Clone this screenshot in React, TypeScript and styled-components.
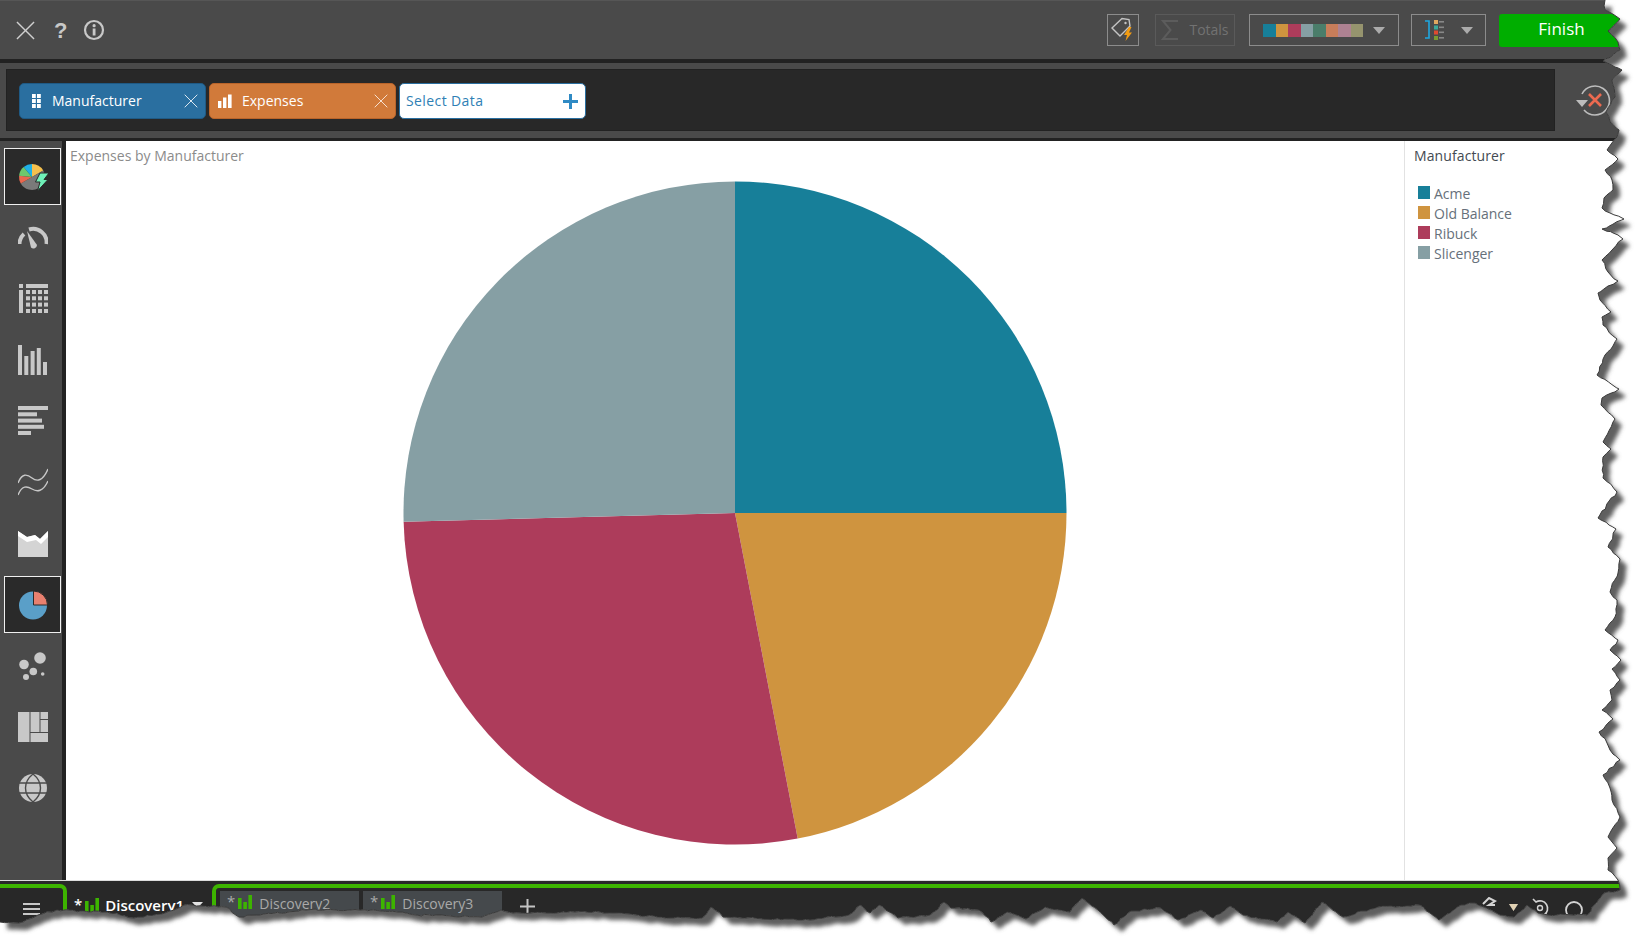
import React from "react";
import styled, { createGlobalStyle } from "styled-components";

const GlobalStyle = createGlobalStyle`
  html, body { margin: 0; padding: 0; background: #fff; }
  body { font-family: "Open Sans", "Noto Sans", "Liberation Sans", sans-serif; overflow: hidden; }
`;

const FONT = `"Open Sans", "Noto Sans", "Liberation Sans", sans-serif`;

const Page = styled.div`
  position: relative;
  width: 1645px;
  height: 945px;
  overflow: hidden;
  background: #fff;
  display: flex;
  flex-direction: column;
  font-family: ${FONT};
`;

const TopBar = styled.header`
  height: 59px;
  flex: none;
  box-sizing: border-box;
  background: #4a4a4a;
  border-top: 1px solid #565656;
  display: flex;
  align-items: center;
  padding: 0 0 0 16px;
`;

const HelpMark = styled.span`
  font-family: "Liberation Sans", sans-serif;
  font-weight: 700;
  font-size: 22px;
  line-height: 1;
  color: #c8c8c8;
  margin: 2px 16px 0 19px;
`;

const Spacer = styled.div`
  flex: 1;
`;

const ToolBox = styled.div<{ $w: number; $muted?: boolean; $mr: number }>`
  width: ${(p) => p.$w}px;
  height: 32px;
  flex: none;
  box-sizing: border-box;
  border: 1px solid ${(p) => (p.$muted ? "#5a5a5a" : "#8c8c8c")};
  margin-right: ${(p) => p.$mr}px;
  display: flex;
  align-items: center;
  justify-content: center;
`;

const TotalsLabel = styled.span`
  color: #727272;
  font-size: 14px;
  margin: -2px 0 0 10px;
`;

const Swatches = styled.div`
  display: flex;
  margin-right: 10px;
`;

const Swatch = styled.i<{ $c: string }>`
  display: block;
  width: 12.5px;
  height: 13px;
  background: ${(p) => p.$c};
`;

const Caret = styled.i`
  display: block;
  width: 0;
  height: 0;
  border-left: 6px solid transparent;
  border-right: 6px solid transparent;
  border-top: 7px solid #ababab;
`;

const ColumnGap = styled.span`
  width: 15px;
  flex: none;
`;

const FinishButton = styled.button`
  width: 146px;
  height: 33px;
  flex: none;
  border: 0;
  border-radius: 3px 0 0 3px;
  background: #00ae00;
  color: #fff;
  font-family: ${FONT};
  font-size: 17px;
  padding: 0 21px 4px 0;
  text-align: center;
`;

const Rule = styled.div<{ $h: number }>`
  height: ${(p) => p.$h}px;
  flex: none;
  background: #222;
`;

const FilterBand = styled.section`
  height: 75px;
  flex: none;
  box-sizing: border-box;
  background: #4a4a4a;
  padding: 6px 0 7px 6px;
  display: flex;
  align-items: stretch;
`;

const FilterWell = styled.div`
  width: 1549px;
  box-sizing: border-box;
  background: #282828;
  border: 1px solid #222;
  padding: 14px 12px 12px;
  display: flex;
  align-items: center;
  gap: 3px;
`;

const Chip = styled.div<{ $bg: string; $line: string; $pad: number }>`
  width: 187px;
  height: 36px;
  flex: none;
  box-sizing: border-box;
  background: ${(p) => p.$bg};
  border: 1px solid ${(p) => p.$line};
  border-radius: 5px;
  color: ${(p) => (p.$bg === "#fff" ? "#2f7fb5" : "#fff")};
  font-size: 14px;
  display: flex;
  align-items: center;
  padding: 0 7px 0 ${(p) => p.$pad}px;
`;

const ChipLabel = styled.span<{ $gap: number; $track?: number }>`
  flex: 1;
  margin-left: ${(p) => p.$gap}px;
  line-height: 1;
  letter-spacing: ${(p) => p.$track ?? 0}px;
`;

const ResetSlot = styled.div`
  flex: 1;
  display: flex;
  align-items: center;
  padding-left: 21px;
`;

const Main = styled.main`
  flex: 1;
  min-height: 0;
  display: flex;
`;

const Sidebar = styled.nav`
  width: 62px;
  flex: none;
  box-sizing: border-box;
  background: #4a4a4a;
  padding: 7px 1px 0 4px;
  display: flex;
  flex-direction: column;
  gap: 4.2px;
`;

const SideDivider = styled.div`
  width: 4px;
  flex: none;
  background: #222;
`;

const SideItem = styled.div<{ $on?: boolean }>`
  width: 57px;
  height: 57px;
  flex: none;
  box-sizing: border-box;
  display: flex;
  align-items: center;
  justify-content: center;
  padding-left: 1px;
  background: ${(p) => (p.$on ? "#2a2a2a" : "transparent")};
  border: 1px solid ${(p) => (p.$on ? "#f0f0f0" : "transparent")};
`;

const ChartArea = styled.div`
  position: relative;
  flex: 1;
  background: #fff;
  display: flex;
  align-items: center;
  justify-content: center;
  padding-top: 5px;
`;

const ChartTitle = styled.div`
  position: absolute;
  left: 4px;
  top: 5px;
  font-size: 14px;
  line-height: 20px;
  color: #8b8b8b;
`;

const Legend = styled.aside`
  width: 241px;
  flex: none;
  box-sizing: border-box;
  background: #fff;
  border-left: 1px solid #e2e2e2;
  padding: 5px 0 0 9px;
`;

const LegendTitle = styled.div`
  font-size: 14px;
  line-height: 20px;
  color: #434a52;
  letter-spacing: 0.1px;
  margin-bottom: 17px;
`;

const LegendRow = styled.div`
  display: flex;
  align-items: center;
  height: 20px;
  padding-left: 4px;
  font-size: 14px;
  color: #66707a;
`;

const LegendSwatch = styled.i<{ $c: string }>`
  width: 12px;
  height: 13px;
  margin: -2px 4px 0 0;
  background: ${(p) => p.$c};
`;

const Footer = styled.footer`
  height: 65px;
  flex: none;
  box-sizing: border-box;
  border-top: 1px solid #dcdcdc;
  background: #282828;
  padding-top: 3px;
  display: flex;
`;

const MenuCell = styled.div`
  width: 67px;
  flex: none;
  box-sizing: border-box;
  border-top: 4px solid #3db400;
  border-right: 4px solid #3db400;
  border-top-right-radius: 7px;
  height: 60px;
  display: flex;
  justify-content: center;
  padding: 14px 0 0 0;
`;

const ActiveTab = styled.div`
  width: 145px;
  flex: none;
  box-sizing: border-box;
  padding: 11px 0 0 7px;
  display: flex;
  align-items: flex-start;
  color: #fff;
  font-size: 15px;
  font-weight: 600;
  line-height: 20px;
`;

const TabStrip = styled.div`
  flex: 1;
  box-sizing: border-box;
  border-top: 4px solid #3db400;
  border-left: 4px solid #3db400;
  border-top-left-radius: 7px;
  padding: 3px 0 0 4px;
  display: flex;
  gap: 4px;
`;

const Tab = styled.div`
  width: 139px;
  height: 40px;
  flex: none;
  box-sizing: border-box;
  background: #45494c;
  padding: 1px 0 0 7px;
  display: flex;
  align-items: flex-start;
  color: #a9a9a9;
  font-size: 14px;
  line-height: 20px;
`;

const Star = styled.span`
  font-size: 15px;
  line-height: 18px;
  margin-right: 3px;
`;

const TabName = styled.span<{ $top: number; $left: number }>`
  margin-left: ${(p) => p.$left}px;
  margin-top: ${(p) => p.$top}px;
`;

const AddTab = styled.span`
  margin: 6px 0 0 14px;
  display: block;
`;

const FooterTools = styled.div`
  margin-left: auto;
  width: 164px;
  flex: none;
  padding-top: 6px;
  display: flex;
  align-items: flex-start;
`;

const TornEdge = styled.svg`
  position: absolute;
  left: 0;
  top: 0;
  width: 1645px;
  height: 945px;
  pointer-events: none;
`;

/* ---------- data ---------- */

const SERIES = [
  { name: "Acme", color: "#177f99", from: 0, to: 90 },
  { name: "Old Balance", color: "#cf943f", from: 90, to: 169.1 },
  { name: "Ribuck", color: "#ad3c5b", from: 169.1, to: 268.5 },
  { name: "Slicenger", color: "#869fa4", from: 268.5, to: 360 },
];

const PALETTE = ["#177f99", "#cf943f", "#ad3c5b", "#869fa4", "#4a7d6a", "#c87d5a", "#ae8292", "#96946e"];

const wedge = (cx: number, cy: number, r: number, a: number, b: number) => {
  const p = (d: number) => {
    const t = (d * Math.PI) / 180;
    return `${(cx + r * Math.sin(t)).toFixed(2)} ${(cy - r * Math.cos(t)).toFixed(2)}`;
  };
  return `M${cx} ${cy}L${p(a)}A${r} ${r} 0 ${b - a > 180 ? 1 : 0} 1 ${p(b)}Z`;
};

/* Hand-traced tear, subdivided with a small fixed jitter so it reads as torn paper. */
const roughen = (raw: string) => {
  const pts = raw.split(" ").map((s) => s.split(",").map(Number));
  const out: string[] = [];
  let seed = 7;
  const rnd = () => {
    seed = (seed * 16807) % 2147483647;
    return (seed / 2147483647 - 0.5) * 1.8;
  };
  pts.forEach((pt, i) => {
    out.push(`${pt[0]},${pt[1]}`);
    const next = pts[i + 1];
    if (!next) return;
    const len = Math.hypot(next[0] - pt[0], next[1] - pt[1]);
    const steps = Math.floor(len / 4);
    for (let k = 1; k < steps; k += 1) {
      const t = k / steps;
      const x = pt[0] + (next[0] - pt[0]) * t + rnd();
      const y = pt[1] + (next[1] - pt[1]) * t + rnd();
      out.push(`${x.toFixed(1)},${y.toFixed(1)}`);
    }
  });
  return out.join(" ");
};

const EDGE = roughen(
  "1605,0 1605,10 1611,13 1620,19 1608,31 1618,42 1620,50 1603,61 1622,70 1612,80 1615,97 1606,112 1610,122 1619,130 1617,137 1607,150 1618,159 1605,170 1612,180 1613,190 1604,198 1602,208 1610,213 1624,219 1602,229 1618,235 1623,239 1612,250 1602,260 1608,272 1618,281 1608,286 1598,293 1600,300 1611,312 1602,317 1603,325 1617,339 1605,355 1597,375 1619,389 1602,398 1601,405 1615,419 1603,442 1611,449 1603,457 1603,478 1617,492 1598,518 1616,529 1608,547 1620,559 1618,573 1610,592 1617,600 1615,617 1605,630 1618,640 1610,650 1621,660 1612,669 1620,680 1610,690 1612,700 1602,710 1613,719 1599,732 1607,743 1610,750 1620,760 1603,775 1610,788 1612,800 1620,817 1608,837 1617,848 1608,858 1608,870 1618,880 1620,890 1604,893 1587,915 1548,915 1538,913 1527,905 1514,917 1500,915 1475,903 1461,905 1439,920 1420,905 1378,907 1343,917 1322,902 1305,923 1288,912 1277,922 1243,915 1230,906 1213,918 1201,910 1178,920 1161,908 1131,911 1114,925 1098,910 1082,898 1070,912 1045,907 1026,919 1007,912 991,922 979,910 951,908 944,902 930,915 898,918 879,905 870,913 860,905 849,915 810,920 723,917 711,907 702,918 670,918 614,913 600,912 513,913 501,910 482,917 417,915 402,912 360,910 306,910 239,917 226,907 184,905 165,913 134,918 107,912 57,910 38,915 19,923 0,922",
);
const PAPER = `M0 0L${EDGE}Z`;
const OUTSIDE = `M0 0H1645V945H0Z${PAPER}`;

/* ---------- icons ---------- */

const Close = ({ s, c, w = 1.5 }: { s: number; c: string; w?: number }) => (
  <svg width={s} height={s} viewBox="0 0 20 20">
    <path d="M1 1L19 19M19 1L1 19" stroke={c} strokeWidth={w} fill="none" />
  </svg>
);

const InfoIcon = () => (
  <svg width="22" height="22" viewBox="0 0 22 22">
    <circle cx="11" cy="11" r="9" fill="none" stroke="#c8c8c8" strokeWidth="2.2" />
    <rect x="9.7" y="9.5" width="2.8" height="7" fill="#c8c8c8" />
    <circle cx="11.1" cy="6.7" r="1.6" fill="#c8c8c8" />
  </svg>
);

const TagBolt = () => (
  <svg width="24" height="26" viewBox="0 0 24 26">
    <path d="M1 11L11 1.5L18 2.5L19 9L9 19Z" fill="none" stroke="#c4c4c4" strokeWidth="1.4" />
    <circle cx="14.5" cy="6" r="1.2" fill="#c4c4c4" />
    <path d="M18 10L13 18H16L14.5 24L21 15.5H18L20.5 10Z" fill="#f39c12" />
  </svg>
);

const Sigma = () => (
  <svg width="18" height="22" viewBox="0 0 18 22">
    <path d="M17 2H2L9.5 11L2 20H17" fill="none" stroke="#5c5c5c" strokeWidth="2" />
  </svg>
);

const ColumnsIcon = () => (
  <svg width="22" height="22" viewBox="0 0 22 22">
    <path d="M1 2H5V19H1" fill="none" stroke="#1ea7e0" strokeWidth="1.6" />
    <rect x="10" y="1" width="4" height="4" fill="#e0a860" />
    <rect x="10" y="6.5" width="4" height="4" fill="#3aa89a" />
    <rect x="10" y="11.5" width="4" height="4" fill="#e04b30" />
    <rect x="10" y="17" width="4" height="4" fill="#7c9a30" />
    {[2, 7.5, 12.5, 18].map((y) => (
      <rect key={y} x="15" y={y} width="5" height="1.6" fill="#888" />
    ))}
  </svg>
);

const ResetIcon = () => (
  <svg width="36" height="36" viewBox="0 0 36 36">
    <path d="M6 12A14.5 14.5 0 1 1 8 28" fill="none" stroke="#bdbdbd" strokeWidth="1.6" />
    <path d="M0 18H12L6 25Z" fill="#bdbdbd" />
    <path d="M13 12L25 24M25 12L13 24" stroke="#ec6a50" strokeWidth="2.6" />
  </svg>
);

const GridGlyph = () => (
  <svg width="9" height="15" viewBox="0 0 9 15">
    {[0, 5, 10].map((y) =>
      [0, 5].map((x) => <rect key={`${x}${y}`} x={x} y={y} width="3.8" height="4" fill="#fff" />),
    )}
  </svg>
);

const BarsGlyph = () => (
  <svg width="14" height="14" viewBox="0 0 14 14">
    <rect x="0" y="7" width="3.4" height="7" fill="#fff" />
    <rect x="5" y="3.5" width="3.4" height="10.5" fill="#fff" />
    <rect x="10" y="0.5" width="3.6" height="13.5" fill="#fff" />
  </svg>
);

const PlusGlyph = () => (
  <svg width="15" height="15" viewBox="0 0 15 15">
    <path d="M7.5 0V15M0 7.5H15" stroke="#2f8ac4" strokeWidth="3" />
  </svg>
);

const TabBars = () => (
  <svg width="14" height="14" viewBox="0 0 14 14" style={{ marginTop: 3 }}>
    <rect x="0" y="3" width="3.6" height="11" fill="#3db400" />
    <rect x="5.3" y="7" width="3.6" height="7" fill="#3db400" />
    <rect x="10.4" y="0" width="3.6" height="14" fill="#3db400" />
  </svg>
);

const G = "#c8c8c8";

const Icon: React.FC<{ children: React.ReactNode }> = ({ children }) => (
  <svg width="30" height="30" viewBox="0 0 30 30">
    {children}
  </svg>
);

const SIDE_ICONS: { key: string; on?: boolean; node: React.ReactNode }[] = [
  {
    key: "auto",
    on: true,
    node: (
      <Icon>
        <path d={wedge(14, 15, 13, 0, 60)} fill="#f4c04e" />
        <path d={wedge(14, 15, 13, 60, 240)} fill="#7a7a7a" />
        <path d={wedge(14, 15, 13, 240, 275)} fill="#e8684f" />
        <path d={wedge(14, 15, 13, 275, 320)} fill="#6dc86d" />
        <path d={wedge(14, 15, 13, 320, 360)} fill="#1fb0e8" />
        <path d="M22 11H31L26 17.5H30L19.5 29L22 20H17.5Z" fill="#6ff0b8" stroke="#2a2a2a" strokeWidth="1" />
      </Icon>
    ),
  },
  {
    key: "gauge",
    node: (
      <Icon>
        <path d="M1.5 21A13.5 13.5 0 0 1 6 11" fill="none" stroke={G} strokeWidth="4" />
        <path d="M11 6.5A13.5 13.5 0 0 1 28.5 21" fill="none" stroke={G} strokeWidth="4" />
        <path d="M9 8L19 22A3.6 3.6 0 0 1 13 24.5Z" fill={G} />
      </Icon>
    ),
  },
  {
    key: "table",
    node: (
      <Icon>
        <rect x="1" y="0" width="4" height="4" fill={G} />
        <rect x="8" y="0" width="22" height="4" fill={G} />
        <rect x="1" y="6" width="4" height="23" fill={G} />
        {[6, 12.3, 18.6, 25].map((y) =>
          [8, 14, 20, 26].map((x) => <rect key={`${x}-${y}`} x={x} y={y} width="4" height="4" fill={G} />),
        )}
      </Icon>
    ),
  },
  {
    key: "bars",
    node: (
      <Icon>
        {[
          [0, 30],
          [6.3, 19],
          [12.6, 24],
          [18.8, 27],
          [25, 13],
        ].map(([x, h]) => (
          <rect key={x} x={x} y={30 - h} width="4" height={h} fill={G} />
        ))}
      </Icon>
    ),
  },
  {
    key: "hbars",
    node: (
      <Icon>
        {[
          [0, 30],
          [6.3, 19],
          [12.6, 24],
          [18.8, 26],
          [25, 13],
        ].map(([y, w]) => (
          <rect key={y} x="0" y={y} width={w} height="4" fill={G} />
        ))}
      </Icon>
    ),
  },
  {
    key: "lines",
    node: (
      <Icon>
        <path d="M0 16C4 6 9 7 14 11S25 14 30 2" fill="none" stroke={G} strokeWidth="1.4" />
        <path d="M0 28C4 18 9 19 14 22S25 25 30 14" fill="none" stroke={G} strokeWidth="1.4" />
      </Icon>
    ),
  },
  {
    key: "area",
    node: (
      <Icon>
        <path d="M0 2L9 8L17 6L22 10L30 2V28H0Z" fill="#d4d4d4" />
        <path d="M0 2L9 8L17 6L22 10L30 2V8L23 15L18 11L9 13L0 7Z" fill="#fff" />
      </Icon>
    ),
  },
  {
    key: "pie",
    on: true,
    node: (
      <Icon>
        <circle cx="15" cy="15.5" r="14" fill="#5a9fc8" />
        <path d="M15.5 1A14 14 0 0 1 29.5 15H15.5Z" fill="#e8806f" stroke="#2a2a2a" strokeWidth="1" />
      </Icon>
    ),
  },
  {
    key: "scatter",
    node: (
      <Icon>
        <circle cx="22" cy="7" r="5.8" fill={G} />
        <circle cx="6" cy="13.5" r="4.8" fill={G} />
        <circle cx="15.3" cy="20.5" r="3.8" fill={G} />
        <circle cx="8" cy="26" r="3" fill={G} />
        <circle cx="24.7" cy="23" r="1.8" fill={G} />
      </Icon>
    ),
  },
  {
    key: "tree",
    node: (
      <Icon>
        <rect x="0" y="0" width="11.5" height="30" fill={G} />
        <rect x="12.5" y="0" width="9" height="20" fill={G} />
        <rect x="22.5" y="0" width="7.5" height="7" fill={G} />
        <rect x="22.5" y="8" width="7.5" height="12" fill={G} />
        <rect x="12.5" y="21" width="17.5" height="9" fill={G} />
      </Icon>
    ),
  },
  {
    key: "globe",
    node: (
      <Icon>
        <circle cx="15" cy="15" r="14" fill={G} />
        <path
          d="M1 10H29M1 20H29M15 1C5 9 5 21 15 29C25 21 25 9 15 1Z"
          fill="none"
          stroke="#4a4a4a"
          strokeWidth="1.4"
        />
      </Icon>
    ),
  },
];

const Hamburger = () => (
  <svg width="17" height="14" viewBox="0 0 17 14">
    <path d="M0 2H17M0 7H17M0 12H17" stroke="#c8c8c8" strokeWidth="2.2" />
  </svg>
);

const Chevron = () => (
  <svg width="11" height="7" viewBox="0 0 11 7" style={{ margin: "7px 0 0 8px", flex: "none" }}>
    <path d="M0 0H11L5.5 6Z" fill="#e4e4e4" />
  </svg>
);

const TabPlus = () => (
  <svg width="15" height="15" viewBox="0 0 15 15">
    <path d="M7.5 0V15M0 7.5H15" stroke="#c4c4c4" strokeWidth="2" />
  </svg>
);

const FooterIcons = () => (
  <svg width="128" height="30" viewBox="0 0 128 30">
    <path d="M2 7L8 1L14 4L8 8L14 8" fill="none" stroke="#d4d4d4" strokeWidth="2" />
    <path d="M28 7H37L32.5 14Z" fill="#dfe7ee" />
    <path d="M28 7H37L32.5 14Z" fill="#e5a845" opacity="0.35" />
    <circle cx="59" cy="11" r="2.5" fill="none" stroke="#d4d4d4" strokeWidth="1.4" />
    <path d="M63 18A7 7 0 1 0 55 5L52 2" fill="none" stroke="#d4d4d4" strokeWidth="1.6" />
    <circle cx="93" cy="13" r="8" fill="none" stroke="#d4d4d4" strokeWidth="1.8" />
  </svg>
);

export default function App() {
  return (
    <>
      <GlobalStyle />
      <Page>
        <TopBar>
          <Close s={19} c="#cfcfcf" />
          <HelpMark>?</HelpMark>
          <InfoIcon />
          <Spacer />
          <ToolBox $w={32} $mr={16}>
            <TagBolt />
          </ToolBox>
          <ToolBox $w={80} $mr={14} $muted>
            <Sigma />
            <TotalsLabel>Totals</TotalsLabel>
          </ToolBox>
          <ToolBox $w={150} $mr={12}>
            <Swatches>
              {PALETTE.map((c) => (
                <Swatch key={c} $c={c} />
              ))}
            </Swatches>
            <Caret />
          </ToolBox>
          <ToolBox $w={75} $mr={13}>
            <ColumnsIcon />
            <ColumnGap />
            <Caret />
          </ToolBox>
          <FinishButton>Finish</FinishButton>
        </TopBar>
        <Rule $h={4} />
        <FilterBand>
          <FilterWell>
            <Chip $bg="#2a6fa0" $line="#1f5a85" $pad={12}>
              <GridGlyph />
              <ChipLabel $gap={11}>Manufacturer</ChipLabel>
              <Close s={14} c="#dfe9f1" w={1.4} />
            </Chip>
            <Chip $bg="#d17a3a" $line="#b9642a" $pad={8}>
              <BarsGlyph />
              <ChipLabel $gap={10}>Expenses</ChipLabel>
              <Close s={14} c="#f6e2d3" w={1.4} />
            </Chip>
            <Chip $bg="#fff" $line="#2a6fa0" $pad={6}>
              <ChipLabel $gap={0} $track={0.4}>
                Select Data
              </ChipLabel>
              <PlusGlyph />
            </Chip>
          </FilterWell>
          <ResetSlot>
            <ResetIcon />
          </ResetSlot>
        </FilterBand>
        <Rule $h={3} />
        <Main>
          <Sidebar>
            {SIDE_ICONS.map((i) => (
              <SideItem key={i.key} $on={i.on}>
                {i.node}
              </SideItem>
            ))}
          </Sidebar>
          <SideDivider />
          <ChartArea>
            <ChartTitle>Expenses by Manufacturer</ChartTitle>
            <svg width="664" height="664" viewBox="0 0 664 664">
              {SERIES.map((s) => (
                <path key={s.name} d={wedge(332, 332, 331.5, s.from, s.to)} fill={s.color} />
              ))}
            </svg>
          </ChartArea>
          <Legend>
            <LegendTitle>Manufacturer</LegendTitle>
            {SERIES.map((s) => (
              <LegendRow key={s.name}>
                <LegendSwatch $c={s.color} />
                {s.name}
              </LegendRow>
            ))}
          </Legend>
        </Main>
        <Footer>
          <MenuCell>
            <Hamburger />
          </MenuCell>
          <ActiveTab>
            <Star>*</Star>
            <TabBars />
            <TabName $top={0} $left={6}>
              Discovery1
            </TabName>
            <Chevron />
          </ActiveTab>
          <TabStrip>
            <Tab>
              <Star>*</Star>
              <TabBars />
              <TabName $top={2} $left={7}>
                Discovery2
              </TabName>
            </Tab>
            <Tab>
              <Star>*</Star>
              <TabBars />
              <TabName $top={2} $left={7}>
                Discovery3
              </TabName>
            </Tab>
            <AddTab>
              <TabPlus />
            </AddTab>
            <FooterTools>
              <FooterIcons />
            </FooterTools>
          </TabStrip>
        </Footer>
        <TornEdge viewBox="0 0 1645 945">
          <defs>
            <clipPath id="outside">
              <path d={OUTSIDE} clipRule="evenodd" />
            </clipPath>
            <filter id="soft" x="-5%" y="-5%" width="110%" height="110%">
              <feGaussianBlur stdDeviation="2" />
            </filter>
          </defs>
          <path d={OUTSIDE} fill="#fff" fillRule="evenodd" />
          <g clipPath="url(#outside)">
            <path d={PAPER} transform="translate(7 7)" fill="#5e5e5e" filter="url(#soft)" />
          </g>
          <polyline points={EDGE} fill="none" stroke="#3a3a3a" strokeWidth="1" />
        </TornEdge>
      </Page>
    </>
  );
}
